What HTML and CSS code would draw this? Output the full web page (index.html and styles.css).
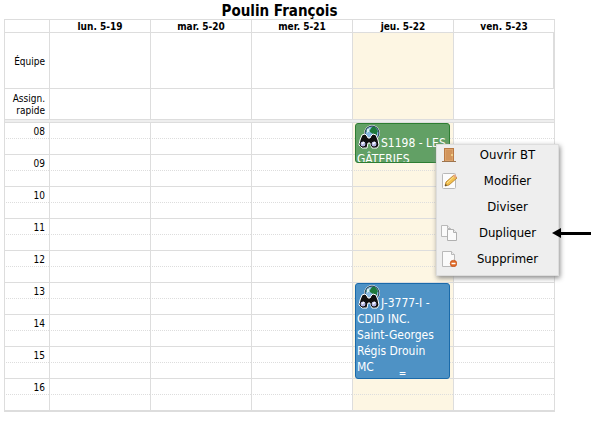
FILE: index.html
```
<!DOCTYPE html>
<html lang="fr">
<head>
    <meta charset="utf-8">
    <title>Poulin François</title>
    <link rel="stylesheet" href="styles.css">
</head>
<body>
    <svg class="defs" width="0" height="0" aria-hidden="true">
        <symbol id="search-globe" viewBox="0 0 24 24">
            <circle cx="15" cy="8" r="7.5" fill="#8fc0e4" stroke="#fff" stroke-width="1"/>
            <circle cx="15" cy="8" r="7" fill="#86b8e2" stroke="#152c38"/>
            <path d="M15 2l3 0 3 4-1 2 0 3-3 3-2-2 1-3-3-2 0-2z" fill="#1f7a3c"/>
            <path d="M9 6l3-3 1 2-2 3z" fill="#1f7a3c"/>
            <path d="M10 4l3-1-1 4-2 1z" fill="#d9edf8"/>
            <path d="M5 10l3-1 2 2 1 2h2l1-2 2-2 3 1 2 5 1 5-2 3-5 0-2-5h-2l-1 5-5 0-3-3 1-5z" fill="#111" stroke="#fff" stroke-width="1"/>
            <circle cx="6" cy="19" r="3" fill="#b5b6e3" stroke="#111"/>
            <circle cx="17" cy="19" r="3" fill="#b5b6e3" stroke="#111"/>
            <path d="M5 19l2-2M16 19l2-2" stroke="#fff" stroke-width="1.5"/>
        </symbol>
    </svg>

    <table class="calendar">
        <caption>Poulin François</caption>
        <colgroup>
            <col class="axis">
            <col><col><col><col><col>
        </colgroup>
        <thead>
            <tr class="days">
                <td></td>
                <th scope="col">lun. 5-19</th>
                <th scope="col">mar. 5-20</th>
                <th scope="col">mer. 5-21</th>
                <th scope="col">jeu. 5-22</th>
                <th scope="col">ven. 5-23</th>
            </tr>
        </thead>
        <tbody>
            <tr class="team"><th scope="row">Équipe</th><td></td><td></td><td></td><td class="today"></td><td></td></tr>
            <tr class="assign"><th scope="row">Assign.<br>rapide</th><td></td><td></td><td></td><td class="today"></td><td></td></tr>
            <tr class="divider"><td colspan="6"></td></tr>
        </tbody>
        <tbody class="slots">
            <tr>
                <th scope="row">08</th><td></td><td></td><td></td>
                <td class="today">
                    <div class="event event-green">
                        <svg class="event-icon"><use href="#search-globe"/></svg>S1198 - LES<br>GÂTERIES
                    </div>
                    <div class="context-menu">
                        <button type="button">
                            <svg viewBox="0 0 16 16">
                                <path d="M3 1h10v13H3z" fill="#b97a45"/>
                                <path d="M4 2h8v12H4z" fill="#dca36c"/>
                                <path d="M5 3h6v10H5z" fill="#d2955c"/>
                                <path d="M1 14.500h14" stroke="#9d754f"/>
                                <circle cx="11" cy="8" r="1" fill="#f8dc91"/>
                            </svg>
                            <span>Ouvrir BT</span>
                        </button>
                        <button type="button">
                            <svg viewBox="0 0 16 16">
                                <rect x="1.500" y=".500" width="13" height="15" rx="1" fill="#fcfcfc" stroke="#b9b9b9"/>
                                <path d="M4 13l1-4 8-7 3 3-8 7z" fill="#f2c04d" stroke="#b17a25" stroke-width=".8"/>
                                <path d="M6 10l7-6.500" stroke="#ffe69a"/>
                                <path d="M12 3l1-1.500h1L15.800 4 14.500 5.500z" fill="#e8a77d"/>
                                <path d="M4 13l.7-2 1.300 1.300z" fill="#333"/>
                            </svg>
                            <span>Modifier</span>
                        </button>
                        <button type="button">
                            <span>Diviser</span>
                        </button>
                        <button type="button">
                            <svg viewBox="0 0 16 16">
                                <path d="M.5.500h6l3 3v8h-9z" fill="#fafafa" stroke="#b9b9b9"/>
                                <path d="M6.500.500v3h3" fill="#eee" stroke="#b9b9b9"/>
                                <path d="M6.500 4.500h6l3 3v8h-9z" fill="#fafafa" stroke="#b0b0b0"/>
                                <path d="M12.500 4.500v3h3" fill="#eee" stroke="#b0b0b0"/>
                            </svg>
                            <span>Dupliquer</span>
                        </button>
                        <button type="button">
                            <svg viewBox="0 0 16 16">
                                <path d="M1.500.500h9l3 3v12h-12z" fill="#fafafa" stroke="#b9b9b9"/>
                                <path d="M10.500.500v3h3" fill="#eee" stroke="#b9b9b9"/>
                                <circle cx="12.500" cy="12.500" r="3.300" fill="#e06a25" stroke="#bd4c18" stroke-width=".6"/>
                                <path d="M10.500 12.500h4" stroke="#fff" stroke-width="1.500"/>
                            </svg>
                            <span>Supprimer</span>
                        </button>
                        <svg class="pointer" viewBox="0 0 40 10">
                            <path d="M0 5l9-5v10z"/>
                            <path d="M8 4h32v3H8z"/>
                        </svg>
                    </div>
                </td>
                <td></td>
            </tr>
            <tr><th></th><td></td><td></td><td></td><td class="today"></td><td></td></tr>
            <tr><th scope="row">09</th><td></td><td></td><td></td><td class="today"></td><td></td></tr>
            <tr><th></th><td></td><td></td><td></td><td class="today"></td><td></td></tr>
            <tr><th scope="row">10</th><td></td><td></td><td></td><td class="today"></td><td></td></tr>
            <tr><th></th><td></td><td></td><td></td><td class="today"></td><td></td></tr>
            <tr><th scope="row">11</th><td></td><td></td><td></td><td class="today"></td><td></td></tr>
            <tr><th></th><td></td><td></td><td></td><td class="today"></td><td></td></tr>
            <tr><th scope="row">12</th><td></td><td></td><td></td><td class="today"></td><td></td></tr>
            <tr><th></th><td></td><td></td><td></td><td class="today"></td><td></td></tr>
            <tr>
                <th scope="row">13</th><td></td><td></td><td></td>
                <td class="today">
                    <div class="event event-blue">
                        <svg class="event-icon"><use href="#search-globe"/></svg>J-3777-I -<br>CDID INC.<br>Saint-Georges<br>Régis Drouin<br>MC
                        <span class="resizer">=</span>
                    </div>
                </td>
                <td></td>
            </tr>
            <tr><th></th><td></td><td></td><td></td><td class="today"></td><td></td></tr>
            <tr><th scope="row">14</th><td></td><td></td><td></td><td class="today"></td><td></td></tr>
            <tr><th></th><td></td><td></td><td></td><td class="today"></td><td></td></tr>
            <tr><th scope="row">15</th><td></td><td></td><td></td><td class="today"></td><td></td></tr>
            <tr><th></th><td></td><td></td><td></td><td class="today"></td><td></td></tr>
            <tr><th scope="row">16</th><td></td><td></td><td></td><td class="today"></td><td></td></tr>
            <tr><th></th><td></td><td></td><td></td><td class="today"></td><td></td></tr>
        </tbody>
    </table>
</body>
</html>
```

FILE: styles.css
```
body {
    margin: 0;
    padding: 0 36px 0 4px;
    background: #fff;
    color: #000;
    font-family: "DejaVu Sans Condensed", "DejaVu Sans", Tahoma, sans-serif;
    font-stretch: condensed;
    font-size: 10px;
    line-height: 12px;
}
.defs {
    position: absolute;
}
.calendar {
    width: 100%;
    table-layout: fixed;
    border-spacing: 0;
    border: 1px solid #ddd;
    border-left: 0;
}
.calendar caption {
    height: 19px;
    font-size: 15px;
    font-weight: bold;
    line-height: 22px;
}
.axis {
    width: 45px;
}
.calendar th,
.calendar td {
    box-sizing: border-box;
    padding: 0;
    border-left: 1px solid #ddd;
    border-bottom: 1px solid #ddd;
}
.calendar tbody th {
    padding-right: 4px;
    font-weight: normal;
    text-align: right;
}
.calendar .days th {
    height: 13px;
    padding-top: 1px;
    font-size: 10px;
    line-height: 11px;
}
.team th {
    height: 56px;
}
.calendar .team th,
.calendar .assign th {
    padding-top: 2px;
}
.team td:last-child {
    border-right: 1px solid #ddd;
}
.assign th {
    height: 31px;
}
.calendar .divider td {
    height: 3px;
    background: #eee;
}
.calendar .today {
    position: relative;
    background: #fdf6e3;
}
.slots th,
.slots td {
    height: 16px;
    line-height: 13px;
}
.calendar .slots th {
    padding-top: 2px;
}
.slots tr:nth-child(odd) > * {
    border-bottom-style: dotted;
}

/* events */
.event {
    position: absolute;
    z-index: 1;
    top: 0;
    left: 2px;
    right: 3px;
    box-sizing: border-box;
    overflow: hidden;
    padding: 1px 1px 0;
    border: 1px solid;
    border-radius: 3px;
    color: #fff;
    font-size: 12px;
    line-height: 16px;
    white-space: nowrap;
}
.event-green {
    height: 40px;
    background: #62a065;
    border-color: #2d7d32;
}
.event-blue {
    height: 96px;
    background: #4e92c5;
    border-color: #1a6aaa;
}
.event-icon {
    width: 24px;
    height: 24px;
    vertical-align: -2px;
}
.resizer {
    position: absolute;
    bottom: 0;
    left: 0;
    width: 100%;
    font-size: 10px;
    line-height: 8px;
    text-align: center;
}

/* right-click menu */
.context-menu {
    position: absolute;
    z-index: 2;
    top: 21px;
    left: 83px;
    box-sizing: border-box;
    width: 123px;
    padding-bottom: 2px;
    border: 1px solid #ddd;
    background: #eee;
    box-shadow: 1px 2px 5px #888;
}
.context-menu button {
    display: flex;
    align-items: flex-start;
    width: 100%;
    height: 26px;
    padding: 2px 4px 0;
    border: 0;
    background: none;
    color: #000;
    font: inherit;
    font-size: 13px;
    line-height: 16px;
    cursor: pointer;
}
.context-menu button:last-of-type {
    height: 24px;
}
.context-menu button:hover {
    background: #ddd;
}
.context-menu button svg {
    width: 16px;
    height: 16px;
}
.context-menu button span {
    flex: 1;
    text-align: center;
}
.context-menu button svg + span {
    margin-left: 4px;
}
.context-menu button span:first-child {
    margin-left: 20px;
}
.pointer {
    position: absolute;
    top: 83px;
    left: 115px;
    width: 40px;
    height: 10px;
}
```
